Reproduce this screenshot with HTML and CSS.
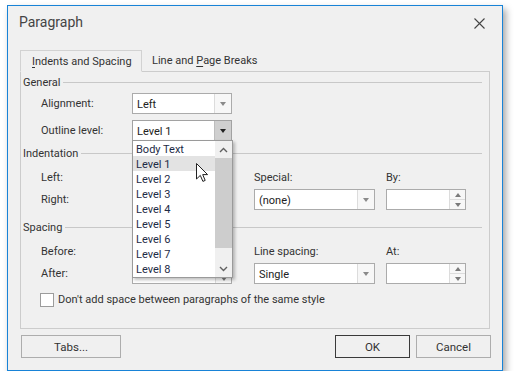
FILE: index.html
```html
<!DOCTYPE html>
<html lang="en">
<head>
  <meta charset="UTF-8">
  <meta name="viewport" content="width=device-width, initial-scale=1.0">
  <title>Paragraph</title>
  <link rel="stylesheet" href="styles.css">
</head>
<body>
  <div class="window">
    <div class="titlebar">
      <span class="title">Paragraph</span>
      <svg class="close" width="11" height="11" viewBox="0 0 11 11"><path d="M0.5 0.5 L10.5 10.5 M10.5 0.5 L0.5 10.5" stroke="#444" stroke-width="1.1"/></svg>
    </div>

    <div class="tabs">
      <div class="tab active"><u>I</u>ndents and Spacing</div>
      <div class="tab"><span>Line and <u>P</u>age Breaks</span></div>
    </div>

    <div class="panel">
      <div class="section-head"><span>General</span></div>
      <div class="fields general">
        <label>Alignment:</label>
        <div class="combo"><span class="value">Left</span><span class="btn"><i class="arrow"></i></span></div>
        <label>Outline level:</label>
        <div class="combo open">
          <span class="value">Level 1</span><span class="btn"><i class="arrow"></i></span>
          <!-- the open list of the outline level box -->
          <div class="list">
            <ul>
              <li>Body Text</li>
              <li class="hover">Level 1</li>
              <li>Level 2</li>
              <li>Level 3</li>
              <li>Level 4</li>
              <li>Level 5</li>
              <li>Level 6</li>
              <li>Level 7</li>
              <li>Level 8</li>
            </ul>
            <div class="scrollbar">
              <div class="sb-btn"><svg width="9" height="6" viewBox="0 0 9 6"><path d="M1 5 L4.5 1.5 L8 5" fill="none" stroke="#606060" stroke-width="1.4"/></svg></div>
              <div class="thumb"></div>
              <div class="track"></div>
              <div class="sb-btn"><svg width="9" height="6" viewBox="0 0 9 6"><path d="M1 1 L4.5 4.5 L8 1" fill="none" stroke="#606060" stroke-width="1.4"/></svg></div>
            </div>
          </div>
        </div>
      </div>

      <div class="section-head"><span>Indentation</span></div>
      <div class="fields pair">
        <label>Left:</label>
        <div class="spin long"><span class="value"></span><span class="spin-btns"><i class="up"></i><i class="down"></i></span></div>
        <label>Special:</label>
        <label>By:</label>
        <label>Right:</label>
        <div class="spin long"><span class="value"></span><span class="spin-btns"><i class="up"></i><i class="down"></i></span></div>
        <div class="combo wide"><span class="value">(none)</span><span class="btn"><i class="arrow"></i></span></div>
        <div class="spin"><span class="value"></span><span class="spin-btns"><i class="up"></i><i class="down"></i></span></div>
      </div>

      <div class="section-head"><span>Spacing</span></div>
      <div class="fields pair">
        <label>Before:</label>
        <div class="spin long"><span class="value"></span><span class="spin-btns"><i class="up"></i><i class="down"></i></span></div>
        <label>Line spacing:</label>
        <label>At:</label>
        <label>After:</label>
        <div class="spin long"><span class="value"></span><span class="spin-btns"><i class="up"></i><i class="down"></i></span></div>
        <div class="combo wide"><span class="value">Single</span><span class="btn"><i class="arrow"></i></span></div>
        <div class="spin"><span class="value"></span><span class="spin-btns"><i class="up"></i><i class="down"></i></span></div>
      </div>

      <div class="check-row">
        <span class="checkbox"></span>
        <span>Don't add space between paragraphs of the same style</span>
      </div>
    </div>

    <div class="buttons">
      <button class="tabs-btn">Tabs...</button>
      <span class="spacer"></span>
      <button class="default">OK</button>
      <button>Cancel</button>
    </div>

    <svg class="cursor" width="13" height="20" viewBox="0 0 13 20"><path d="M0.5 0.5 L0.5 16 L4.3 12.4 L6.9 18.4 L9.2 17.4 L6.7 11.6 L11.6 11.6 Z" fill="#fff" stroke="#222" stroke-width="1"/></svg>
  </div>
</body>
</html>
```

FILE: styles.css
```css
body {
  margin: 0;
  background: #ffffff;
  font-family: Roboto, "Noto Sans", sans-serif;
  font-size: 11px;
  color: #333;
}

.window {
  position: relative;
  box-sizing: border-box;
  width: 496px;
  height: 366px;
  margin: 5px 0 0 7px;
  background: #f0f0f0;
  border: 1px solid #1883d7;
  box-shadow: 3px 4px 7px rgba(0, 0, 0, 0.35);
}

.titlebar {
  display: flex;
  justify-content: space-between;
  align-items: flex-start;
  height: 44px;
  box-sizing: border-box;
  padding: 5px 17px 0 11px;
}

.title {
  font-size: 14px;
  line-height: 22px;
  color: #444;
}

.close {
  margin-top: 7px;
}

/* tabs */
.tabs {
  display: flex;
  margin: 0 12px;
  height: 21px;
}

.tab {
  position: relative;
  box-sizing: border-box;
  height: 22px;
  padding: 0 10px 0 10px;
  line-height: 22px;
  color: #333;
  white-space: nowrap;
}

.tab.active {
  width: 122px;
  padding-left: 11px;
  border: 1px solid #d2d2d2;
  border-bottom: 1px solid #f0f0f0;
  background: #f0f0f0;
  z-index: 1;
}

.tab u {
  text-underline-offset: 2px;
}

.panel {
  box-sizing: border-box;
  height: 258px;
  margin: 0 12px;
  border: 1px solid #cccccc;
}

.section-head {
  display: flex;
  align-items: center;
  gap: 3px;
  height: 20px;
  padding: 0 7px 0 2px;
  color: #333;
}

.section-head::after {
  content: "";
  flex: 1;
  border-top: 1px solid #c8c8c8;
}

.fields {
  display: grid;
  grid-template-columns: 91px 122px 132px 80px;
  padding-left: 20px;
  align-items: center;
}

.fields label {
  color: #333;
}

.general {
  grid-template-columns: 91px 100px;
  grid-template-rows: 21px 21px;
  row-gap: 6px;
  padding-top: 1px;
  padding-bottom: 2px;
}

.pair {
  grid-template-rows: 24px 21px;
  padding-top: 2px;
  padding-bottom: 7px;
}

/* combo boxes */
.combo {
  position: relative;
  display: flex;
  box-sizing: border-box;
  width: 100px;
  height: 21px;
  border: 1px solid #ababab;
  background: #fff;
}

.combo.wide {
  width: 121px;
}

.combo .value {
  flex: 1;
  padding-left: 4px;
  line-height: 21px;
  color: #222;
}

.combo .btn {
  display: flex;
  align-items: center;
  justify-content: center;
  width: 16px;
  border-left: 1px solid #dcdcdc;
  background: #f7f7f7;
}

.arrow {
  width: 0;
  height: 0;
  border-left: 3.5px solid transparent;
  border-right: 3.5px solid transparent;
  border-top: 4px solid #8a8a8a;
}

.combo.open {
  border-color: #a2a2a2;
}

.combo.open .btn {
  background: #cfcfcf;
  border-left-color: #bdbdbd;
}

.combo.open .arrow {
  border-top-color: #222;
}

/* dropdown list */
.list {
  position: absolute;
  top: 19px;
  left: -1px;
  z-index: 5;
  display: flex;
  box-sizing: border-box;
  width: 101px;
  height: 138px;
  border: 1px solid #9a9a9a;
  background: #fff;
  box-shadow: 2px 2px 3px rgba(0, 0, 0, 0.25);
}

.list ul {
  flex: 1;
  margin: 0;
  padding: 0;
  list-style: none;
}

.list li {
  height: 15px;
  padding-left: 3px;
  line-height: 17px;
  color: #1e2b46;
}

.list li.hover {
  background: #e3e3e3;
}

.scrollbar {
  display: flex;
  flex-direction: column;
  width: 17px;
  background: #f0f0f0;
}

.sb-btn {
  display: flex;
  align-items: center;
  justify-content: center;
  height: 17px;
}

.thumb {
  height: 90px;
  background: #cdcdcd;
}

.track {
  flex: 1;
}

/* spin edits */
.spin {
  display: flex;
  box-sizing: border-box;
  width: 80px;
  height: 21px;
  border: 1px solid #ababab;
  background: #fff;
}

.spin.long {
  width: 100px;
}

.spin .value {
  flex: 1;
}

.spin-btns {
  display: flex;
  flex-direction: column;
  width: 15px;
  border-left: 1px solid #dcdcdc;
  background: #f7f7f7;
}

.spin-btns i {
  flex: 1;
  display: flex;
  align-items: center;
  justify-content: center;
}

.spin-btns i::before {
  content: "";
  border-left: 3.5px solid transparent;
  border-right: 3.5px solid transparent;
}

.spin-btns .up {
  border-bottom: 1px solid #dcdcdc;
}

.spin-btns .up::before {
  border-bottom: 4px solid #7a7a7a;
}

.spin-btns .down::before {
  border-top: 4px solid #7a7a7a;
}

.check-row {
  display: flex;
  align-items: center;
  gap: 4px;
  height: 17px;
  padding-left: 19px;
}

.checkbox {
  box-sizing: border-box;
  width: 14px;
  height: 14px;
  border: 1px solid #9c9c9c;
  background: #fff;
}

/* bottom buttons */
.buttons {
  display: flex;
  gap: 6px;
  padding: 6px 11px 0 13px;
}

.spacer {
  flex: 1;
}

button {
  box-sizing: border-box;
  width: 75px;
  height: 23px;
  border: 1px solid #adadad;
  background: #f0f0f0;
  font-family: inherit;
  font-size: 11.5px;
  color: #333;
  padding: 0;
}

button.tabs-btn {
  width: 100px;
}

button.default {
  border-color: #3a3a3a;
}

.cursor {
  position: absolute;
  left: 188px;
  top: 157px;
  z-index: 10;
}
```
